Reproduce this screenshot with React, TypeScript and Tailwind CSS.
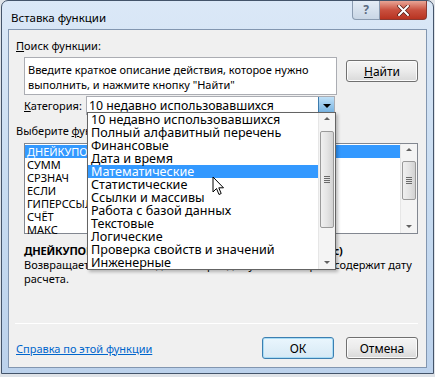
import React from "react";

const font = { fontFamily: '"Noto Sans", "Open Sans", sans-serif' };

const categories = [
  "10 недавно использовавшихся",
  "Полный алфавитный перечень",
  "Финансовые",
  "Дата и время",
  "Математические",
  "Статистические",
  "Ссылки и массивы",
  "Работа с базой данных",
  "Текстовые",
  "Логические",
  "Проверка свойств и значений",
  "Инженерные",
];

const functions = ["ДНЕЙКУПОН", "СУММ", "СРЗНАЧ", "ЕСЛИ", "ГИПЕРССЫЛКА", "СЧЁТ", "МАКС"];

function Scrollbar({ thumbTop, thumbHeight }: { thumbTop: number; thumbHeight: number }) {
  return (
    <div className="relative w-[17px] h-full bg-[#f4f4f4] border-l border-[#e6e6e6] shrink-0">
      <div className="absolute top-[4px] left-0 w-full flex justify-center">
        <div className="w-0 h-0 border-l-[3px] border-r-[3px] border-b-[3px] border-l-transparent border-r-transparent border-b-[#606060]" />
      </div>
      <div
        className="absolute left-[1px] w-[14px] rounded-[2px] border border-[#9a9a9a] bg-gradient-to-r from-[#f0f0f0] via-[#e4e4e4] to-[#d2d2d2] flex flex-col items-center justify-center gap-[1px]"
        style={{ top: thumbTop, height: thumbHeight }}
      >
        <div className="w-[6px] h-[1px] bg-[#6a6a6a]" />
        <div className="w-[6px] h-[1px] bg-[#6a6a6a]" />
        <div className="w-[6px] h-[1px] bg-[#6a6a6a]" />
        <div className="w-[6px] h-[1px] bg-[#6a6a6a]" />
      </div>
      <div className="absolute bottom-[5px] left-0 w-full flex justify-center">
        <div className="w-0 h-0 border-l-[3px] border-r-[3px] border-t-[3px] border-l-transparent border-r-transparent border-t-[#606060]" />
      </div>
    </div>
  );
}

function Button({ children, focused }: { children: React.ReactNode; focused?: boolean }) {
  return (
    <div
      className={
        "w-[72px] h-[22px] rounded-[3px] border flex items-center justify-center text-[12px] text-black " +
        (focused
          ? "border-[#3c7fb1] bg-gradient-to-b from-[#eaf6fd] to-[#d6e9f5] shadow-[inset_0_0_0_1px_#a8dcf5]"
          : "border-[#707070] bg-gradient-to-b from-[#f4f4f4] via-[#ebebeb] to-[#d9d9d9] shadow-[inset_0_0_0_1px_#fbfbfb]")
      }
    >
      {children}
    </div>
  );
}

export default function App() {
  return (
    <div className="w-[435px] h-[377px] bg-[#dfe3e8] overflow-hidden" style={font}>
      <div className="relative w-[433px] h-[374px] ml-[1px] rounded-t-[7px] border border-[#44546a] bg-gradient-to-b from-[#dbe8f7] via-[#c8dcf1] to-[#bcd2ec] px-[6px] pb-[5px] flex flex-col">
        {/* title bar */}
        <div className="h-[28px] flex items-start shrink-0">
          <div className="pt-[8px] pl-[3px] text-[11.5px] text-black">Вставка функции</div>
          <div className="ml-auto flex">
            <div className="w-[28px] h-[19px] rounded-bl-[4px] border border-t-0 border-[#8a9bb0] bg-gradient-to-b from-[#e4ecf5] to-[#c9d6e5] flex items-center justify-center text-[12px] font-bold text-[#5a6a80]">
              ?
            </div>
            <div className="w-[47px] h-[19px] rounded-br-[4px] border border-t-0 border-l-0 border-[#8a3a33] bg-gradient-to-b from-[#e8a596] via-[#c9503f] to-[#b83320] flex items-center justify-center">
              <svg width="13" height="11" viewBox="0 0 13 11">
                <path d="M2 1 L11 10 M11 1 L2 10" stroke="#4a1a14" strokeWidth="3.4" strokeLinecap="round" />
                <path d="M2 1 L11 10 M11 1 L2 10" stroke="#ffffff" strokeWidth="2" strokeLinecap="round" />
              </svg>
            </div>
          </div>
        </div>

        {/* client area */}
        <div className="relative flex-1 border border-[#8296b0] bg-[#f0f0f0] flex flex-col pl-[6px] pr-[8px] text-[11px] text-black leading-[13px]">
          <div className="mt-[9px] ml-[1px]">
            <span className="underline">П</span>оиск функции:
          </div>

          <div className="flex mt-[5px] ml-[9px] gap-[9px]">
            <div className="w-[313px] h-[38px] border border-[#abadb3] bg-white px-[3px] pt-[4px] leading-[15px]">
              Введите краткое описание действия, которое нужно выполнить, и нажмите кнопку "Найти"
            </div>
            <div className="mt-[3px]">
              <Button>
                <span>
                  <span className="underline">Н</span>айти
                </span>
              </Button>
            </div>
          </div>

          <div className="flex items-center mt-[1px] ml-[9px]">
            <div className="w-[62px]">
              <span className="underline">К</span>атегория:
            </div>
            <div className="w-[249px] h-[19px] border border-[#abadb3] bg-white flex items-center text-[12.3px]">
              <div className="flex-1 pl-[2px]">10 недавно использовавшихся</div>
              <div className="w-[16px] h-[17px] border-l border-[#3d7bad] bg-gradient-to-b from-[#bfe0f7] to-[#6eaedf] flex items-center justify-center">
                <div className="w-0 h-0 border-l-[4px] border-r-[4px] border-t-[4px] border-l-transparent border-r-transparent border-t-black" />
              </div>
            </div>
          </div>

          <div className="mt-[9px] ml-[1px]">
            Выберите <span className="underline">ф</span>ункцию:
          </div>

          <div className="ml-[9px] mt-[6px] h-[91px] border border-[#828790] bg-white flex">
            <div className="flex-1 pt-[1px]">
              {functions.map((f, i) => (
                <div key={f} className={"h-[13px] pl-[2px] " + (i === 0 ? "bg-[#3399ff] text-white" : "")}>
                  {f}
                </div>
              ))}
            </div>
            <Scrollbar thumbTop={17} thumbHeight={39} />
          </div>

          <div className="mt-[10px] ml-[9px] font-bold tracking-[-0.2px]">
            ДНЕЙКУПОН(дата_согл;дата_вступл_в_силу;частота;базис)
          </div>
          <div className="mt-[1px] ml-[9px] leading-[14px]">
            Возвращает количество дней в периоде купона, который содержит дату расчета.
          </div>

          <div className="mt-auto h-[1px] bg-[#d5d5d5] border-b border-white mb-[13px]" />

          <div className="flex items-center mb-[8px]">
            <div className="ml-[1px] text-[#0066cc] underline">Справка по этой функции</div>
            <div className="ml-auto flex gap-[12px]">
              <Button focused>ОК</Button>
              <Button>Отмена</Button>
            </div>
          </div>

          {/* open category dropdown */}
          <div className="absolute left-[78px] top-[82px] w-[249px] h-[158px] border border-[#646464] bg-white flex shadow-[2px_2px_3px_rgba(0,0,0,0.25)] text-[12.6px] leading-[13px]">
            <div className="flex-1">
              {categories.map((c, i) => (
                <div key={c} className={"h-[13px] pl-[3px] whitespace-nowrap " + (i === 4 ? "bg-[#3399ff] text-white" : "")}>
                  {c}
                </div>
              ))}
            </div>
            <Scrollbar thumbTop={18} thumbHeight={97} />
          </div>

          {/* mouse cursor */}
          <svg className="absolute left-[203px] top-[146px]" width="13" height="20" viewBox="0 0 13 20">
            <path d="M1 1 L1 16 L4.5 12.5 L7 18.5 L9.2 17.5 L6.8 11.8 L11.5 11.8 Z" fill="white" stroke="black" strokeWidth="1" />
          </svg>
        </div>
      </div>
    </div>
  );
}
